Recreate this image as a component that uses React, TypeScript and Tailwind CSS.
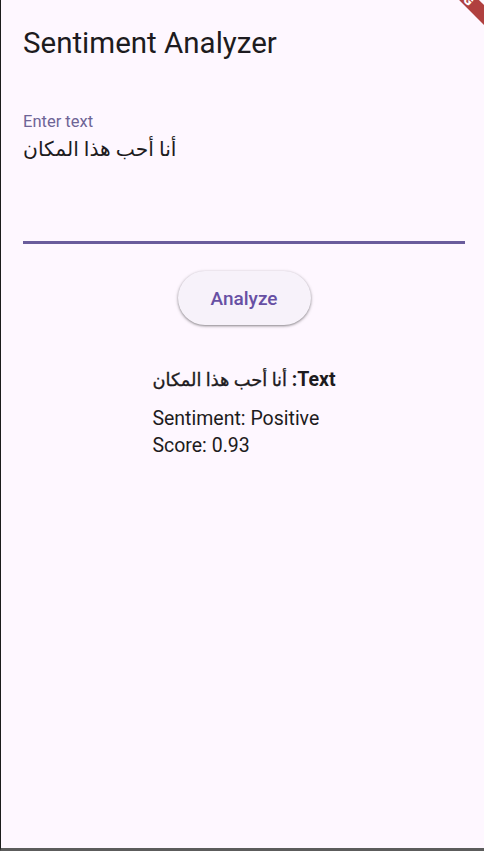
import React from "react";

export default function App() {
  const arabic = "أنا أحب هذا المكان";
  return (
    <div className="relative w-[484px] h-[851px] overflow-hidden bg-[#fef7ff] border-l border-l-[#1c1c1c] border-b-[3px] border-b-[#5c5c5c] font-['Roboto','DejaVu_Sans',sans-serif] text-[#1d1b20]">
      <div className="w-[486px] flex flex-col">
        <header className="h-[87px] flex items-center px-[22px] text-[29.5px] leading-none">
          Sentiment Analyzer
        </header>
        <main className="px-[22px] pt-[22px] flex flex-col items-center">
          <div className="w-full pt-[5px]">
            <div className="text-[16.5px] leading-[16px] text-[#6e6496]">Enter text</div>
            <div className="mt-[3px] h-[108px] text-[20.3px] leading-[32px] text-[#1d1b20] text-left">
              {arabic}
            </div>
            <div className="h-[3px] bg-[#6a5c9c]" />
          </div>
          <button className="mt-[27px] h-[54px] px-[33px] rounded-full bg-[#f7f2fa] shadow-[0_1px_2px_rgba(0,0,0,0.3),0_1px_3px_1px_rgba(0,0,0,0.15)] text-[19px] font-medium text-[#6750a4] leading-none">
            Analyze
          </button>
          <div className="mt-[41px] flex flex-col items-start text-[19.5px] leading-[27px]">
            <div dir="rtl" className="whitespace-nowrap">
              <span className="font-bold">Text:</span>{" "}
              <span className="text-[17.8px] [-webkit-text-stroke:0.35px_#1d1b20]">{arabic}</span>
            </div>
            <div className="mt-[12px]">Sentiment: Positive</div>
            <div>Score: 0.93</div>
          </div>
        </main>
      </div>
      <div className="absolute left-[331px] top-[-24px] w-[240px] h-[14px] rotate-45 bg-[#b0403f] flex items-center justify-center">
        <span className="translate-x-[7px] text-[13px] leading-none font-black text-white tracking-wide">DEBUG</span>
      </div>
    </div>
  );
}
